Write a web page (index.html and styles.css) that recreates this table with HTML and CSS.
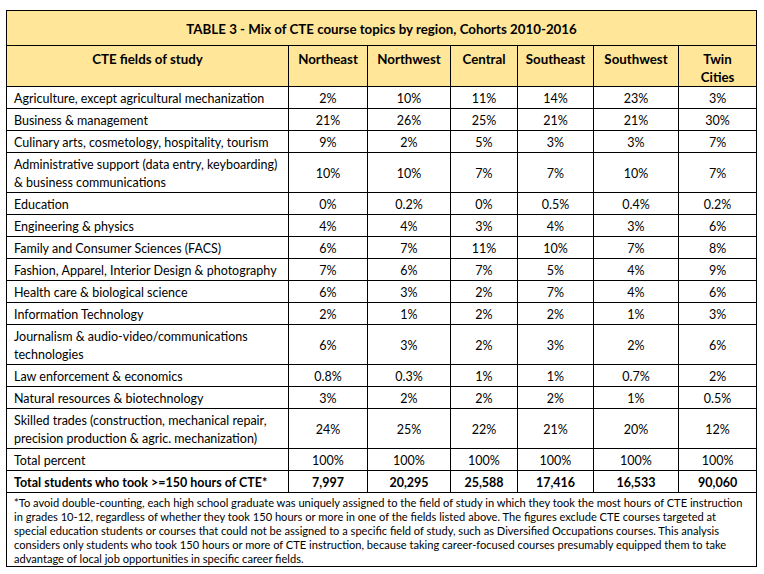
FILE: index.html
```html
<!DOCTYPE html>
<html lang="en">
<head>
<meta charset="utf-8">
<title>TABLE 3 - Mix of CTE course topics by region</title>
<link rel="stylesheet" href="styles.css">
</head>
<body>
<div class="page">
<table class="cte">
  <colgroup>
    <col class="c-field">
    <col class="c-ne">
    <col class="c-nw">
    <col class="c-ce">
    <col class="c-se">
    <col class="c-sw">
    <col class="c-tc">
  </colgroup>
  <thead>
    <tr class="title-row"><th colspan="7">TABLE 3 - Mix of CTE course topics by region, Cohorts 2010-2016</th></tr>
    <tr class="head-row">
      <th>CTE fields of study</th>
      <th>Northeast</th>
      <th>Northwest</th>
      <th>Central</th>
      <th>Southeast</th>
      <th>Southwest</th>
      <th>Twin Cities</th>
    </tr>
  </thead>
  <tbody>
    <tr><td>Agriculture, except agricultural mechanization</td><td>2%</td><td>10%</td><td>11%</td><td>14%</td><td>23%</td><td>3%</td></tr>
    <tr><td>Business &amp; management</td><td>21%</td><td>26%</td><td>25%</td><td>21%</td><td>21%</td><td>30%</td></tr>
    <tr><td>Culinary arts, cosmetology, hospitality, tourism</td><td>9%</td><td>2%</td><td>5%</td><td>3%</td><td>3%</td><td>7%</td></tr>
    <tr><td>Administrative support (data entry, keyboarding) &amp; business communications</td><td>10%</td><td>10%</td><td>7%</td><td>7%</td><td>10%</td><td>7%</td></tr>
    <tr><td>Education</td><td>0%</td><td>0.2%</td><td>0%</td><td>0.5%</td><td>0.4%</td><td>0.2%</td></tr>
    <tr><td>Engineering &amp; physics</td><td>4%</td><td>4%</td><td>3%</td><td>4%</td><td>3%</td><td>6%</td></tr>
    <tr><td>Family and Consumer Sciences (FACS)</td><td>6%</td><td>7%</td><td>11%</td><td>10%</td><td>7%</td><td>8%</td></tr>
    <tr><td>Fashion, Apparel, Interior Design &amp; photography</td><td>7%</td><td>6%</td><td>7%</td><td>5%</td><td>4%</td><td>9%</td></tr>
    <tr><td>Health care &amp; biological science</td><td>6%</td><td>3%</td><td>2%</td><td>7%</td><td>4%</td><td>6%</td></tr>
    <tr><td>Information Technology</td><td>2%</td><td>1%</td><td>2%</td><td>2%</td><td>1%</td><td>3%</td></tr>
    <tr><td>Journalism &amp; audio-video/communications technologies</td><td>6%</td><td>3%</td><td>2%</td><td>3%</td><td>2%</td><td>6%</td></tr>
    <tr><td>Law enforcement &amp; economics</td><td>0.8%</td><td>0.3%</td><td>1%</td><td>1%</td><td>0.7%</td><td>2%</td></tr>
    <tr><td>Natural resources &amp; biotechnology</td><td>3%</td><td>2%</td><td>2%</td><td>2%</td><td>1%</td><td>0.5%</td></tr>
    <tr><td>Skilled trades (construction, mechanical repair, precision production &amp; agric. mechanization)</td><td>24%</td><td>25%</td><td>22%</td><td>21%</td><td>20%</td><td>12%</td></tr>
    <tr><td>Total percent</td><td>100%</td><td>100%</td><td>100%</td><td>100%</td><td>100%</td><td>100%</td></tr>
    <tr class="total-row"><td>Total students who took &gt;=150 hours of CTE*</td><td>7,997</td><td>20,295</td><td>25,588</td><td>17,416</td><td>16,533</td><td>90,060</td></tr>
    <tr class="note-row"><td colspan="7">*To avoid double-counting, each high school graduate was uniquely assigned to the field of study in which they took the most hours of CTE instruction in grades 10-12, regardless of whether they took 150 hours or more in one of the fields listed above. The figures exclude CTE courses targeted at special education students or courses that could not be assigned to a specific field of study, such as Diversified Occupations courses. This analysis considers only students who took 150 hours or more of CTE instruction, because taking career-focused courses presumably equipped them to take advantage of local job opportunities in specific career fields.</td></tr>
  </tbody>
</table>
</div>
</body>
</html>
```

FILE: styles.css
```css
html, body {
  margin: 0;
  padding: 0;
  background: #ffffff;
}

.page {
  padding: 10px 0 0 6px;
}

.cte {
  border-collapse: collapse;
  table-layout: fixed;
  width: 751px;
  font-family: Lato, "Open Sans", sans-serif;
  font-size: 12.5px;
  line-height: 18px;
  color: #000000;
}

.c-field { width: 282px; }
.c-ne { width: 79px; }
.c-nw { width: 83px; }
.c-ce { width: 67px; }
.c-se { width: 76px; }
.c-sw { width: 85px; }
.c-tc { width: 78px; }

.cte th,
.cte td {
  border: 1px solid #000000;
}

.cte th {
  background: #ffe699;
  font-weight: bold;
  text-align: center;
  vertical-align: top;
  padding: 4px 6px 0;
  font-size: 13.3px;
}

.title-row th {
  padding: 9px 4px 7px;
}

.cte td {
  padding: 3px 4px 0;
  text-align: center;
  vertical-align: middle;
}

.cte td:first-child {
  text-align: left;
  padding-left: 7px;
}

.total-row td {
  font-weight: bold;
}

.note-row td,
.cte .note-row td:first-child {
  text-align: left;
  font-size: 11.1px;
  line-height: 14px;
  padding: 3px 7px 0;
}
```
